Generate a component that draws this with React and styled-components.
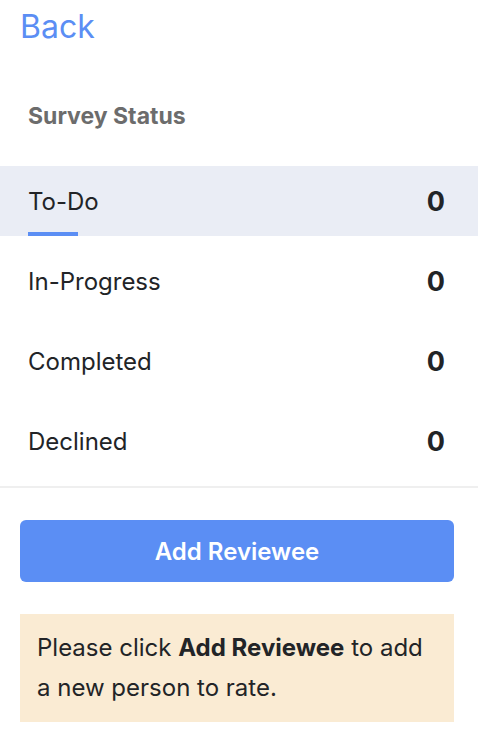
import React from "react";
import styled, { createGlobalStyle } from "styled-components";

const GlobalStyle = createGlobalStyle`
  body {
    margin: 0;
    background: #ffffff;
    font-family: Inter, "Noto Sans", sans-serif;
    color: #222427;
  }
`;

const Page = styled.div`
  width: 478px;
  display: flex;
  flex-direction: column;
`;

const BackLink = styled.a`
  display: block;
  margin: 7px 0 0 20px;
  font-size: 32px;
  line-height: 40px;
  color: #5b8ef4;
  text-decoration: none;
  cursor: pointer;
`;

const SectionTitle = styled.h2`
  margin: 55px 0 0 28px;
  font-size: 23px;
  font-weight: 700;
  line-height: 28px;
  color: #6c6c6c;
`;

const StatusList = styled.div`
  margin-top: 36px;
  display: flex;
  flex-direction: column;
  gap: 10px;
  padding-bottom: 10px;
  border-bottom: 2px solid #efefef;
`;

const Row = styled.div`
  position: relative;
  height: 70px;
  display: flex;
  align-items: center;
  justify-content: space-between;
  padding: 0 33px 0 28px;
  background: ${(p) => (p.$active ? "#eaedf5" : "transparent")};
  cursor: pointer;
`;

const Label = styled.span`
  font-size: 24px;
  color: #222427;
`;

const Count = styled.span`
  font-size: 27px;
  font-weight: 700;
  color: #222427;
`;

const Underline = styled.span`
  position: absolute;
  left: 28px;
  bottom: 0;
  width: 50px;
  height: 4px;
  background: #5b8ef4;
`;

const Actions = styled.div`
  display: flex;
  flex-direction: column;
  gap: 32px;
  padding: 32px 24px 0 20px;
`;

const Button = styled.button`
  height: 62px;
  border: none;
  border-radius: 6px;
  background: #5b8ef4;
  color: #ffffff;
  font-family: Inter, "Noto Sans", sans-serif;
  font-size: 24px;
  font-weight: 600;
  cursor: pointer;
`;

const Notice = styled.div`
  background: #faebd3;
  padding: 14px 17px;
  font-size: 24px;
  line-height: 40px;
  color: #222427;
`;

const statuses = [
  { label: "To-Do", count: 0 },
  { label: "In-Progress", count: 0 },
  { label: "Completed", count: 0 },
  { label: "Declined", count: 0 },
];

function App() {
  return (
    <Page>
      <GlobalStyle />
      <BackLink>Back</BackLink>
      <SectionTitle>Survey Status</SectionTitle>
      <StatusList>
        {statuses.map((s, i) => (
          <Row key={s.label} $active={i === 0}>
            <Label>{s.label}</Label>
            <Count>{s.count}</Count>
            {i === 0 && <Underline />}
          </Row>
        ))}
      </StatusList>
      <Actions>
        <Button>Add Reviewee</Button>
        <Notice>
          Please click <b>Add Reviewee</b> to add a new person to rate.
        </Notice>
      </Actions>
    </Page>
  );
}

export default App;
